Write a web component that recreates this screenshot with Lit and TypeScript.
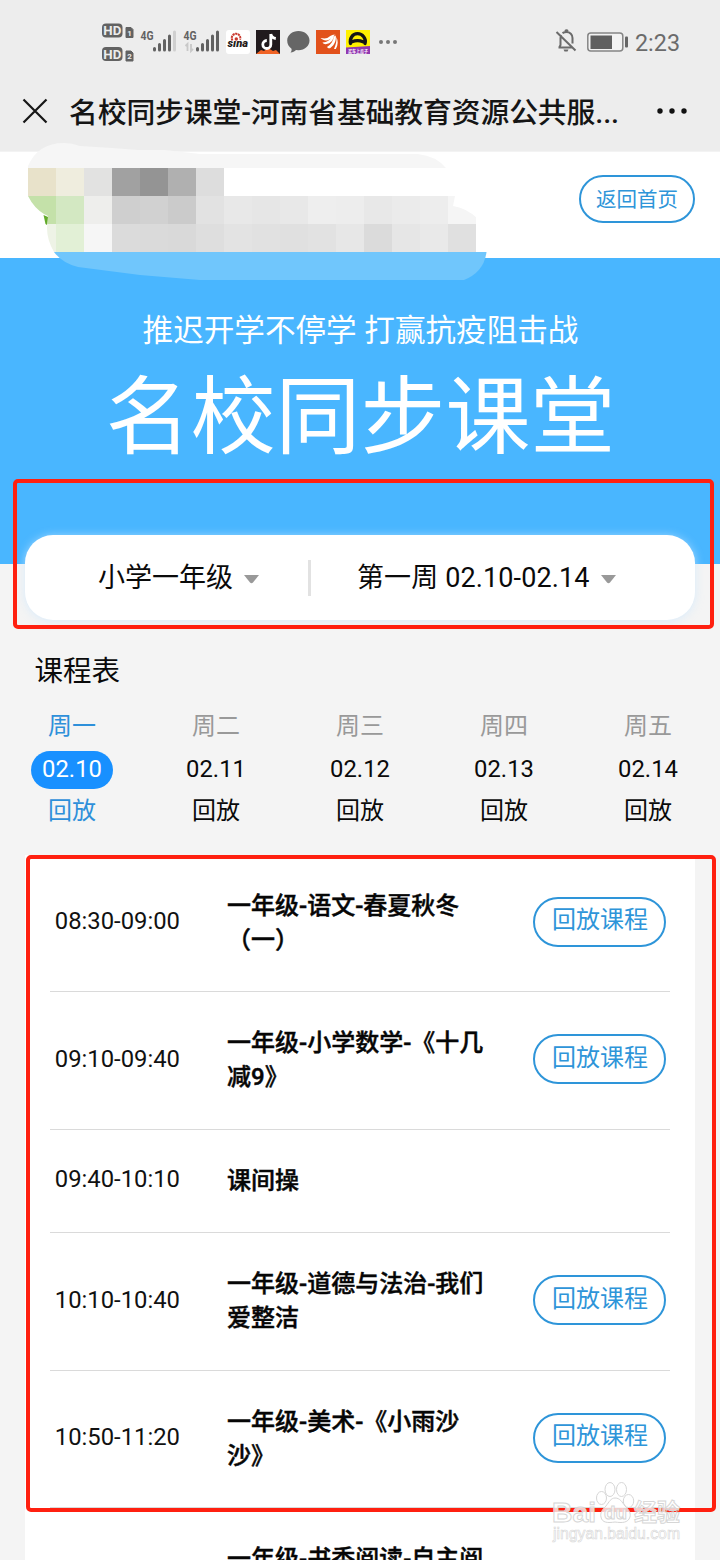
import { LitElement, html, svg, css } from "lit";
import { customElement, property } from "lit/decorators.js";
import { classMap } from "lit/directives/class-map.js";

type Lesson = { time: string; title: string; replay: boolean };
type Day = { week: string; date: string; active?: boolean };

const DAYS: Day[] = [
  { week: "周一", date: "02.10", active: true },
  { week: "周二", date: "02.11" },
  { week: "周三", date: "02.12" },
  { week: "周四", date: "02.13" },
  { week: "周五", date: "02.14" },
];

const LESSONS: Lesson[] = [
  { time: "08:30-09:00", title: "一年级-语文-春夏秋冬（一）", replay: true },
  { time: "09:10-09:40", title: "一年级-小学数学-《十几减9》", replay: true },
  { time: "09:40-10:10", title: "课间操", replay: false },
  { time: "10:10-10:40", title: "一年级-道德与法治-我们爱整洁", replay: true },
  { time: "10:50-11:20", title: "一年级-美术-《小雨沙沙》", replay: true },
  { time: "", title: "一年级-书香阅读-自主阅读", replay: false },
];

const BLOCK = 28;
const MOSAIC: string[][] = [
  ["#e8e2ca", "#efedde", "#e2e2e1", "#a1a1a1", "#949494", "#b0b0b0", "#dddddd"],
  ["#c4e1a9", "#d3e8c2", "#eeeeec", "#cfcfcf", "#d1d1d1", "#cbcbcb", "#e2e2e2", "#e8e8e8", "#e6e6e6", "#e8e8e8", "#eeeeee", "#ededed", "#e8e8e8", "#ebebeb", "#ededed", "#f5f5f5"],
  ["#eef3e6", "#e2f0d6", "#f6f6f6", "#dbdbdb", "#dadada", "#d9d9d9", "#dedede", "#e3e3e3", "#e1e1e1", "#e0e0e0", "#e2e2e2", "#e7e7e7", "#dbdbdb", "#e6e6e6", "#e9e9e9", "#e0e0e0"],
];

@customElement("status-bar")
class StatusBar extends LitElement {
  static styles = css`
    :host { display: block; height: 80px; }
    svg { display: block; }
    text { font-family: Roboto, "Noto Sans CJK SC", sans-serif; }
    .hd { font-size: 13px; font-weight: 700; fill: #ededed; }
    .sim { font-size: 8px; font-weight: 700; fill: #ededed; }
    .net { font-size: 12.500px; font-weight: 700; fill: #626262; }
    .sina { font-size: 11px; font-weight: 900; font-style: italic; fill: #251c1a; }
    .tag { font-size: 5px; font-weight: 700; fill: #fff; }
    .clock { font-size: 24px; fill: #6b6b6b; }
  `;
  private hd(y: number, n: string) {
    return svg`
      <rect x="102" y=${y} width="20.500" height="14" rx="4" fill="#626262"/>
      <text class="hd" x="103.300" y=${y + 11.6} textLength="18" lengthAdjust="spacingAndGlyphs">HD</text>
      <path d=${`M126 ${y + 4}h5l2 2v8h-7z`} fill="#626262" stroke="#626262" stroke-width="1" stroke-linejoin="round"/>
      <text class="sim" x="127.300" y=${y + 12}>${n}</text>`;
  }
  private bars(x: number, last: string) {
    return svg`<g stroke-width="3" stroke-linecap="round" stroke="#626262">
      <path d=${`M${x} 48.500v1.500M${x + 5} 44.500v5.500M${x + 10} 40.500v9.500M${x + 15} 36v14`}/>
      <path d=${`M${x + 20} 32v18`} stroke=${last}/></g>`;
  }
  render() {
    return html`<svg width="720" height="80" viewBox="0 0 720 80">
      ${this.hd(23.5, "1")}${this.hd(47, "2")}
      <text class="net" x="140.500" y="39.500" textLength="13" lengthAdjust="spacingAndGlyphs">4G</text>
      ${this.bars(154.5, "#cfcfcf")}
      <text class="net" x="183.500" y="39.500" textLength="13" lengthAdjust="spacingAndGlyphs">4G</text>
      <path d="M187.500 51v-7l-2 2M191 44v7l2-2" fill="none" stroke="#c8c8c8" stroke-width="1.800"/>
      ${this.bars(197.5, "#626262")}
      <rect x="226" y="30" width="24" height="24" rx="3" fill="#fff"/>
      <path d="M232.500 40.500a4.300 4.300 0 1 1 7.500-.8" fill="none" stroke="#c93a30" stroke-width="2" stroke-dasharray="2.200 .6"/>
      <circle cx="236.300" cy="39" r="1.700" fill="#c93a30"/>
      <text class="sina" x="227.500" y="46.500" textLength="20.500" lengthAdjust="spacingAndGlyphs">sına</text>
      <rect x="256" y="30" width="24" height="24" fill="#211a1d"/>
      <path d="M256 54l5-4 3 1 4-3 5 3 3-1 4 4z" fill="#f06325"/>
      <path d="M270.800 34v10.500a4 4 0 1 1-4-4M270.800 34q.8 4 5 4.500" fill="none" stroke="#fff" stroke-width="2.800"/>
      <path d="M298.500 31c6.300 0 11 4.200 11 9.500s-4.700 9.700-11 9.700l-2.500-.2c-1.500 1.700-3.500 2.600-5.500 2.500 1-1 1.300-2.300 1-3.800-2.700-1.900-4.300-4.800-4.300-8.200 0-5.300 5-9.500 11.300-9.500z" fill="#666"/>
      <rect x="316" y="30" width="24" height="24" fill="#e2511b"/>
      <path d="M320.500 38c4.500 1 7 .5 9-1.500 2-1.800 4-2 6-1.800-3 1-3.700 3.300-6.500 5-2.600 1.300-6 .8-8.500-1.700zM322.500 42.500c5-.2 8-2.800 9.500-6l2-1c-.6 4-2.800 8.200-8.500 8.700-1.200 0-2.300-.6-3-1.700zM327 47c4-2.200 6.300-6.300 7-10.500l1.700-1c.8 4-.6 9-5.300 12.500-1.300.6-2.600.1-3.400-1zM334 49c2-4.500 2.800-8 2.300-12 2 3.500 1.900 8-.5 12z" fill="#fff"/>
      <rect x="346" y="30" width="24" height="24" fill="#fff100"/>
      <path d="M346 47.500l24-1.500v8h-24z" fill="#9137b0"/>
      <path d="M350.500 43.500c-1-5 2-9.800 7-9.800s9 4.800 7.500 9.800M352 41.800q5.500-2.500 11 0" fill="none" stroke="#151515" stroke-width="3.300" stroke-linecap="round"/>
      <text class="tag" x="348" y="52.500" textLength="20" lengthAdjust="spacingAndGlyphs">买车上瓜子</text>
      <g fill="#777"><circle cx="381" cy="42" r="2"/><circle cx="388" cy="42" r="2"/><circle cx="395" cy="42" r="2"/></g>
      <g fill="none" stroke="#6b6b6b" stroke-width="2">
        <path d="M558.500 47.500h13.500M559.500 47l1-2v-7c0-1.200.3-2.200.8-3M562.500 33.200c1.200-.8 2.500-1.200 4-1.200 3.500 0 6 2.700 6 6v5.500M565 31q1.500-1.300 3 0M556.500 32l19 18.500"/>
      </g>
      <path d="M563.500 49.500h5l-1 2h-3z" fill="#6b6b6b"/>
      <rect x="587.800" y="33" width="35" height="18" rx="3" fill="#f2f2f2" stroke="#858585" stroke-width="1.500"/>
      <rect x="590.500" y="35.500" width="21.500" height="13.500" fill="#5f5f5f"/>
      <rect x="625" y="36.500" width="3" height="11" rx="1" fill="#666"/>
      <text class="clock" x="635" y="51" textLength="45" lengthAdjust="spacingAndGlyphs">2:23</text>
    </svg>`;
  }
}

@customElement("nav-bar")
class NavBar extends LitElement {
  static styles = css`
    :host { display: flex; align-items: center; height: 72px; padding: 0 32px 10px 22px; box-sizing: border-box; }
    .close { flex: none; width: 26px; height: 26px; }
    .title { margin-left: 21px; padding-top: 3px; flex: 1; font-size: 28.800px; line-height: 42px; letter-spacing: -.1px; color: #151515; white-space: nowrap; font-weight: 500; }
    .more { flex: none; width: 32px; height: 8px; }
  `;
  render() {
    return html`
      <svg class="close" viewBox="0 0 26 26"><path d="M1.500 1.500l23 23M24.500 1.500l-23 23" stroke="#161616" stroke-width="2.200"/></svg>
      <div class="title">名校同步课堂-河南省基础教育资源公共服...</div>
      <svg class="more" viewBox="0 0 32 8"><g fill="#111"><circle cx="4" cy="4" r="2.700"/><circle cx="16" cy="4" r="2.700"/><circle cx="28" cy="4" r="2.700"/></g></svg>`;
  }
}

@customElement("logo-mosaic")
class LogoMosaic extends LitElement {
  static styles = css`
    :host { display: block; width: 500px; height: 150px; }
    svg { display: block; }
  `;
  render() {
    return html`<svg width="500" height="150" viewBox="0 140 500 150">
      <defs><clipPath id="edge"><path d="M28 168H476V252H54Q47 240 47 228L48 216L44 214Q34 208 28 196z"/></clipPath></defs>
      <path d="M28 168V166Q38 143 64 143Q72 143 80 146L112 148L138 150L165 150L200 154H418Q436 156 446 168z" fill="#f6f6f6"/>
      <path d="M28 168H446L455 196H28z" fill="#fff"/>
      <path d="M54 252H486.500Q484 272 464 280H200L140 275L78 267Q62 263 54 252z" fill="#70c6fc"/>
      <g clip-path="url(#edge)" shape-rendering="crispEdges">
        ${MOSAIC.map((row, r) => row.map((c, i) => svg`<rect x=${28 + i * BLOCK} y=${168 + r * BLOCK} width=${BLOCK} height=${BLOCK} fill=${c}/>`))}
      </g>
      <path d="M455 196H477V218Q466 208 453 206L455 196z" fill="#fff"/>
      <path d="M43.500 215L48 217L47 225L45.500 224z" fill="#62ab2a"/>
    </svg>`;
  }
}

@customElement("lesson-row")
class LessonRow extends LitElement {
  @property({ attribute: false }) lesson!: Lesson;
  static styles = css`
    :host { display: grid; grid-template-columns: 177px 263px 1fr; align-items: center; box-sizing: border-box;
      margin: 0 25px; padding: 34px 0 34.800px; border-bottom: 1.500px solid #dadada; min-height: 103.200px; }
    .time { margin: -1px 0 1px; padding-left: 4.800px; font-size: 23.800px; line-height: 33px; color: #111; }
    .title { font-size: 24px; line-height: 33.800px; font-weight: 500; color: #060606; padding: 1px 4px 0 0; margin-bottom: -1px; -webkit-text-stroke: .45px #060606; }
    .replay { justify-self: end; margin: -1px 4px 1px 0; box-sizing: border-box; width: 133px; height: 50px; border: 2px solid #2e95d9;
      border-radius: 25px; background: none; color: #2e95d9; font: 400 24px/42px Roboto, "Noto Sans CJK SC", sans-serif; padding: 0 0 3px 1px; }
  `;
  render() {
    const l = this.lesson;
    return html`<span class="time">${l.time}</span><span class="title">${l.title}</span>
      ${l.replay ? html`<button class="replay">回放课程</button>` : html`<span></span>`}`;
  }
}

@customElement("baidu-mark")
class BaiduMark extends LitElement {
  static styles = css`
    :host { display: block; }
    svg { display: block; }
    text { font-family: "Liberation Sans", "Noto Sans CJK SC", sans-serif; fill: rgba(255,255,255,.75); stroke: #d6d6d6; stroke-width: 1px; }
    .name { font-size: 28px; font-weight: 700; }
    .du { font-size: 19px; font-weight: 700; }
    .cn { font-size: 24px; font-weight: 700; }
    .url { font-size: 16px; stroke-width: .6px; }
  `;
  render() {
    return html`<svg width="140" height="70" viewBox="545 1475 140 70">
      <g fill="#fff" fill-opacity=".75" stroke="#d6d6d6">
        <ellipse cx="601.500" cy="1498" rx="5" ry="6.500"/><ellipse cx="610" cy="1489.500" rx="5" ry="7"/>
        <ellipse cx="621.500" cy="1489.500" rx="5" ry="7"/><ellipse cx="628.500" cy="1501" rx="5.200" ry="6.500"/>
        <path d="M615 1498c5 0 7 4 10 8 4 4 6 7 5 11-2 6-8 6-15 5-7 1-13 1-14-5-1-4 1-7 5-11 3-4 5-8 9-8z"/>
      </g>
      <text class="name" x="552" y="1522" textLength="44" lengthAdjust="spacingAndGlyphs">Bai</text>
      <text class="du" x="604" y="1519" textLength="23" lengthAdjust="spacingAndGlyphs">du</text>
      <text class="cn" x="634" y="1521" textLength="46" lengthAdjust="spacingAndGlyphs">经验</text>
      <text class="url" x="553" y="1539" textLength="127" lengthAdjust="spacingAndGlyphs">jingyan.baidu.com</text>
    </svg>`;
  }
}

@customElement("app-root")
class AppRoot extends LitElement {
  static styles = css`
    :host { display: block; position: relative; width: 720px; height: 1560px; overflow: hidden; background: #f4f4f4;
      font-family: Roboto, "Noto Sans CJK SC", sans-serif; color: #0a0a0a; }
    .top { background: #ededed; border-bottom: 1px solid #f3f3f3; height: 151px; }
    .brand { height: 106px; background: #fff; display: flex; justify-content: flex-end; align-items: flex-start; box-sizing: border-box; padding: 23px 25px 0 0; }
    .home { box-sizing: border-box; width: 116px; height: 48px; border: 2px solid #2e95d9; border-radius: 24px; background: #fff;
      color: #2e95d9; font: 400 20.500px/40px Roboto, "Noto Sans CJK SC", sans-serif; padding: 1px 0 0; white-space: nowrap; }
    .hero { height: 306px; background: #49b6ff; color: #fff; text-align: center; box-sizing: border-box; padding: 51px 0 0 1px; }
    .slogan { font-size: 30.600px; line-height: 44px; }
    .headline { font-size: 84.900px; line-height: 122px; margin-top: 4px; }
    .picker { position: relative; display: flex; align-items: center; box-sizing: border-box; margin: -29px 25px 0; height: 85px; border-radius: 28px;
      background: #fff; box-shadow: 0 1px 10px rgba(205,232,255,.7); font-size: 27px; line-height: 40px; }
    .choice { display: flex; align-items: center; gap: 11px; }
    .grade { width: 211px; padding-left: 73px; }
    .week { padding-left: 46px; gap: 11px; letter-spacing: .12px; }
    .arrow { width: 15px; height: 9px; margin-top: 3px; }
    .rule { width: 3px; height: 36px; background: #e2e2e2; flex: none; margin-left: -1px; }
    .heading { margin: 31px 0 0 34.500px; font-size: 28.500px; line-height: 42px; }
    .days { display: grid; grid-template-columns: repeat(5, 144px); margin-top: 12px; font-size: 24px; text-align: center; }
    .day { display: flex; flex-direction: column; align-items: center; }
    .name { line-height: 40px; color: #999; padding-top: 1px; }
    .date { line-height: 36px; padding: 0 11px 2px; border-radius: 19px; margin-top: 5px; font-size: 23.800px; }
    .state { line-height: 40px; margin-top: 2px; }
    .active .name, .active .state { color: #2e90da; }
    .active .date { color: #fff; background: #1890ff; }
    .list { margin: 24px 25px 0; background: #fff; }
    .mosaic, .mark, .frame { position: absolute; }
    .mosaic { left: 0; top: 140px; }
    .mark { left: 545px; top: 1475px; }
    .frame { box-sizing: border-box; border: 4px solid #ff2010; border-radius: 5px; pointer-events: none; }
    .frame-picker { left: 13px; top: 479px; width: 701px; height: 150px; }
    .frame-list { left: 26px; top: 855px; width: 690px; height: 657px; }
  `;
  render() {
    const arrow = html`<svg class="arrow" viewBox="0 0 15 9"><path d="M0 0h15l-6 7.500q-1.500 1.500-3 0z" fill="#999"/></svg>`;
    return html`
      <div class="top"><status-bar></status-bar><nav-bar></nav-bar></div>
      <div class="brand"><button class="home">返回首页</button></div>
      <div class="hero">
        <div class="slogan">推迟开学不停学 打赢抗疫阻击战</div>
        <div class="headline">名校同步课堂</div>
      </div>
      <div class="picker">
        <div class="choice grade"><span>小学一年级</span>${arrow}</div>
        <div class="rule"></div>
        <div class="choice week"><span>第一周 02.10-02.14</span>${arrow}</div>
      </div>
      <div class="heading">课程表</div>
      <div class="days">
        ${DAYS.map((d) => html`<div class=${classMap({ day: true, active: !!d.active })}>
          <span class="name">${d.week}</span><span class="date">${d.date}</span><span class="state">回放</span></div>`)}
      </div>
      <div class="list">${LESSONS.map((l) => html`<lesson-row .lesson=${l}></lesson-row>`)}</div>
      <logo-mosaic class="mosaic"></logo-mosaic>
      <div class="frame frame-picker"></div>
      <div class="frame frame-list"></div>
      <baidu-mark class="mark"></baidu-mark>`;
  }
}
